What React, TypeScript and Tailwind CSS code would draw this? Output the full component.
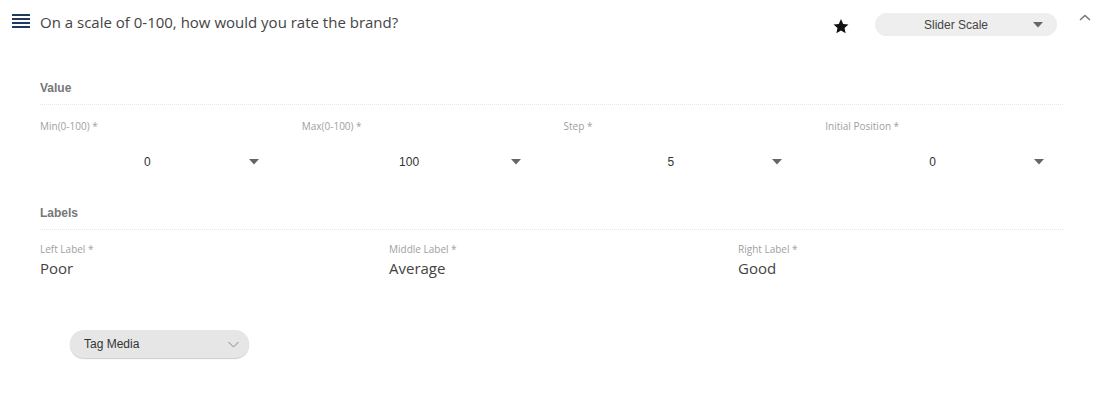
import React from "react";

const open = { fontFamily: '"Open Sans", "Liberation Sans", sans-serif' };
const helv = { fontFamily: '"Liberation Sans", Arial, sans-serif' };

function Caret({ className = "" }: { className?: string }) {
  return (
    <svg width="10" height="6" viewBox="0 0 10 6" className={className}>
      <path d="M0 0 L10 0 L5 5.5 Z" fill="#666" />
    </svg>
  );
}

function SelectField({ label, value }: { label: string; value: string }) {
  return (
    <div className="flex flex-col">
      <div className="text-[10px] leading-[12px] text-[#a0a0a0]" style={open}>
        {label}
      </div>
      <div className="flex items-center h-[24px] mt-[18px] pr-[19px]">
        <div className="flex-1 text-center text-[12px] text-[#333] pl-[6px]" style={helv}>
          {value}
        </div>
        <Caret />
      </div>
    </div>
  );
}

function TextField({ label, value }: { label: string; value: string }) {
  return (
    <div className="flex flex-col">
      <div className="text-[10px] leading-[12px] text-[#a0a0a0]" style={open}>
        {label}
      </div>
      <div className="text-[15px] leading-[20px] mt-[3px] text-[#444]" style={open}>
        {value}
      </div>
    </div>
  );
}

export default function App() {
  return (
    <div className="w-[1100px] h-[412px] bg-white relative overflow-hidden">
      {/* header */}
      <div className="flex items-start pl-[12px] pr-[8px] pt-[12px]">
        <svg width="18" height="16" viewBox="0 0 18 16" className="mt-[2px]">
          <rect x="0" y="0" width="18" height="2" fill="#1e3a5f" />
          <rect x="0" y="4" width="18" height="2" fill="#1e3a5f" />
          <rect x="0" y="8" width="18" height="2" fill="#1e3a5f" />
          <rect x="0" y="12" width="18" height="2" fill="#1e3a5f" />
        </svg>
        <div className="ml-[10px] text-[15px] leading-[20px] text-[#444]" style={open}>
          On a scale of 0-100, how would you rate the brand?
        </div>
        <div className="flex-1" />
        <svg width="18" height="17" viewBox="0 0 24 24" className="mt-[6px]">
          <path
            d="M12 1.5 L15.1 8.3 L22.5 9.1 L17 14.1 L18.5 21.5 L12 17.8 L5.5 21.5 L7 14.1 L1.5 9.1 L8.9 8.3 Z"
            fill="#111"
          />
        </svg>
        <div className="ml-[25px] mt-[1px] w-[182px] h-[23px] rounded-full bg-[#eeeeee] flex items-center">
          <div className="flex-1 text-center text-[12px] text-[#444] pl-[8px]" style={helv}>
            Slider Scale
          </div>
          <div className="w-[28px] pl-[4px]">
            <Caret />
          </div>
        </div>
        <svg width="14" height="10" viewBox="0 0 14 10" className="ml-[21px] mt-[1px]">
          <path d="M2 7 L7 2.5 L12 7" stroke="#777" strokeWidth="1.6" fill="none" />
        </svg>
      </div>

      {/* Value section */}
      <div className="pl-[40px] pr-[37px] mt-[45px]">
        <div className="text-[12px] font-bold leading-[14px] text-[#777]" style={helv}>
          Value
        </div>
        <div className="mt-[9px] border-t border-dotted border-[#e6e6e6]" />
        <div className="grid grid-cols-4 gap-x-[24px] mt-[15px]">
          <SelectField label="Min(0-100) *" value="0" />
          <SelectField label="Max(0-100) *" value="100" />
          <SelectField label="Step *" value="5" />
          <SelectField label="Initial Position *" value="0" />
        </div>

        <div className="text-[12px] font-bold leading-[14px] text-[#777] mt-[32px]" style={helv}>
          Labels
        </div>
        <div className="mt-[9px] border-t border-dotted border-[#e6e6e6]" />
        <div className="grid grid-cols-3 gap-x-[24px] mt-[13px]">
          <TextField label="Left Label *" value="Poor" />
          <TextField label="Middle Label *" value="Average" />
          <TextField label="Right Label *" value="Good" />
        </div>
      </div>

      {/* Tag media */}
      <div className="pl-[70px] mt-[52px]">
        <div className="w-[179px] h-[28px] rounded-full bg-[#e6e6e6] shadow-[0_1px_1px_rgba(0,0,0,0.2)] flex items-center pl-[14px] pr-[10px]">
          <div className="flex-1 text-[12px] text-[#333]" style={helv}>
            Tag Media
          </div>
          <svg width="11" height="7" viewBox="0 0 11 7">
            <path d="M0.5 1 L5.5 6 L10.5 1" stroke="#888" strokeWidth="1" fill="none" />
          </svg>
        </div>
      </div>
    </div>
  );
}
